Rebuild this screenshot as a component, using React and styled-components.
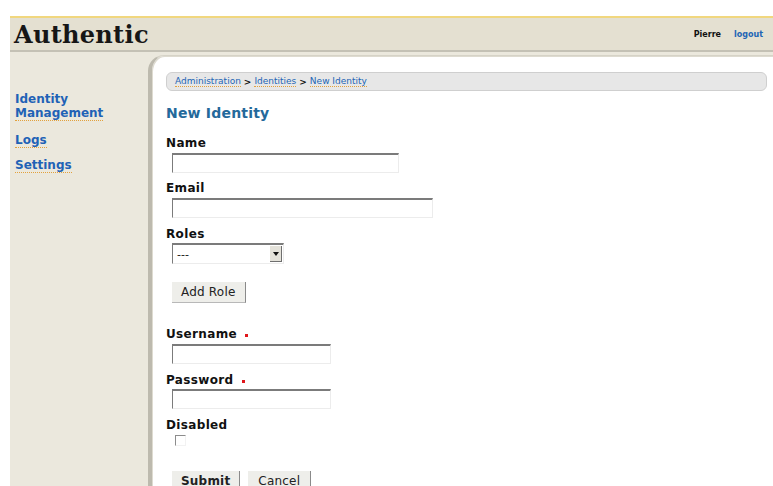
import React from 'react';
import styled, { createGlobalStyle } from 'styled-components';

const GlobalStyle = createGlobalStyle`
  html, body {
    margin: 0;
    padding: 0;
    background: #ffffff;
  }
  body {
    font-family: "DejaVu Sans", Verdana, sans-serif;
    color: #111;
    overflow: hidden;
  }
`;

const Page = styled.div`
  width: 773px;
  height: 486px;
  padding: 16px 0 0 10px;
  box-sizing: border-box;
  display: flex;
  flex-direction: column;
  overflow: hidden;
`;

// bandeau du haut
const Header = styled.header`
  flex-shrink: 0;
  height: 36px;
  box-sizing: border-box;
  background: #e4e0d1;
  border-top: 2px solid #f1d77e;
  border-bottom: 2px solid #c4c1b5;
  display: flex;
  align-items: center;
  justify-content: space-between;
  padding: 0 10px 0 4px;
`;

const Brand = styled.h1`
  margin: 0;
  font-family: "DejaVu Serif", "Liberation Serif", serif;
  font-weight: bold;
  font-size: 24px;
  color: #161616;
  letter-spacing: 0.3px;
`;

const UserBox = styled.div`
  display: flex;
  gap: 13px;
  font-size: 8px;
  font-weight: bold;
`;

const UserName = styled.span`
  color: #111;
`;

const Logout = styled.a`
  color: #2265b5;
  text-decoration: none;
`;

const Body = styled.div`
  flex: 1;
  min-height: 0;
  display: flex;
  background: #ebe8dd;
`;

const Sidebar = styled.nav`
  width: 138px;
  flex-shrink: 0;
  padding: 40px 0 0 5px;
  box-sizing: border-box;
  display: flex;
  flex-direction: column;
  gap: 10px;
`;

const MenuLink = styled.a`
  align-self: flex-start;
  font-size: 12px;
  line-height: 14px;
  font-weight: bold;
  color: #1f62b6;
  text-decoration: none;
  border-bottom: 1px dotted #e2a13c;
  margin-bottom: ${p => p.$after ?? 0}px;
`;

// panneau principal blanc
const Panel = styled.main`
  flex: 1;
  margin-top: 3px;
  background: #fff;
  border-top-left-radius: 16px;
  border-left: 4px solid #bdbaae;
  border-top: 1px solid #d6d3c7;
  box-shadow: inset 1px 1px 0 #dedbd0;
  padding: 16px 6px 0 14px;
  box-sizing: border-box;
  overflow: hidden;
`;

const Breadcrumb = styled.div`
  height: 19px;
  box-sizing: border-box;
  background: #e7e7e7;
  border: 1px solid #cfcfcf;
  border-radius: 6px;
  display: flex;
  align-items: center;
  padding-left: 8px;
  font-size: 9px;
  color: #111;
`;

const Crumb = styled.a`
  color: #2265b5;
  text-decoration: none;
  border-bottom: 1px dotted #e2a13c;
  line-height: 10px;
`;

const Sep = styled.span`
  font-weight: bold;
  margin: 0 3px;
`;

const Title = styled.h2`
  margin: 14px 0 0 0;
  font-size: 14px;
  line-height: 17px;
  font-weight: bold;
  color: #24699b;
  letter-spacing: 0.2px;
`;

const Field = styled.div`
  margin-top: ${p => p.$top}px;
`;

const Label = styled.label`
  display: flex;
  align-items: center;
  font-size: 12px;
  line-height: 15px;
  font-weight: bold;
  letter-spacing: 0.35px;
  color: #111;
  margin-bottom: ${p => p.$gap ?? 2}px;
`;

const Required = styled.span`
  display: inline-block;
  width: 3px;
  height: 3px;
  background: #e0161b;
  margin-left: 8px;
  margin-top: 1px;
`;

const TextInput = styled.input`
  display: block;
  width: ${p => p.$width}px;
  height: 20px;
  box-sizing: border-box;
  margin: 0 0 0 6px;
  padding: 0 3px;
  border-top: 2px solid #7b7b7b;
  border-left: 1px solid #7b7b7b;
  border-right: 1px solid #ececec;
  border-bottom: 1px solid #ececec;
  background: #fff;
  font-family: inherit;
  font-size: 11px;
`;

const Select = styled.div`
  width: 112px;
  height: 21px;
  margin-left: 6px;
  box-sizing: border-box;
  display: flex;
  align-items: center;
  border-top: 2px solid #7b7b7b;
  border-left: 1px solid #7b7b7b;
  border-right: 1px solid #ececec;
  border-bottom: 1px solid #ececec;
  font-size: 11px;
`;

const SelectValue = styled.span`
  flex: 1;
  padding-left: 4px;
`;

const SelectArrow = styled.span`
  width: 12px;
  height: 16px;
  margin-right: 1px;
  background: #e4e2da;
  border-right: 1px solid #6f6f6f;
  border-bottom: 1px solid #6f6f6f;
  display: flex;
  align-items: center;
  justify-content: center;
  box-sizing: border-box;
`;

const Button = styled.button`
  margin-left: ${p => p.$left ?? 6}px;
  height: 21px;
  padding: 0 ${p => p.$pad ?? 8}px;
  box-sizing: border-box;
  background: #eeeeea;
  border: none;
  border-right: 1px solid #8a8a8a;
  border-bottom: 1px solid #b8b8b8;
  font-family: inherit;
  font-size: 12px;
  font-weight: ${p => (p.$primary ? 'bold' : 'normal')};
  letter-spacing: 0.2px;
  color: #222;
`;

const ButtonRow = styled.div`
  display: flex;
  margin-top: ${p => p.$top}px;
`;

const Checkbox = styled.span`
  display: block;
  width: 11px;
  height: 11px;
  margin: ${p => p.$top}px 0 0 9px;
  box-sizing: border-box;
  border-top: 1px solid #8c8c8c;
  border-left: 1px solid #8c8c8c;
  border-right: 1px solid #f2f2f2;
  border-bottom: 1px solid #f2f2f2;
`;

export default function App() {
  return (
    <>
      <GlobalStyle />
      <Page>
        <Header>
          <Brand>Authentic</Brand>
          <UserBox>
            <UserName>Pierre</UserName>
            <Logout href="#">logout</Logout>
          </UserBox>
        </Header>
        <Body>
          <Sidebar>
            <MenuLink href="#" $after={2}>Identity<br />Management</MenuLink>
            <MenuLink href="#">Logs</MenuLink>
            <MenuLink href="#">Settings</MenuLink>
          </Sidebar>
          <Panel>
            <Breadcrumb>
              <Crumb href="#">Administration</Crumb>
              <Sep>&gt;</Sep>
              <Crumb href="#">Identities</Crumb>
              <Sep>&gt;</Sep>
              <Crumb href="#">New Identity</Crumb>
            </Breadcrumb>
            <Title>New Identity</Title>

            <Field $top={14}>
              <Label>Name</Label>
              <TextInput $width={227} />
            </Field>
            <Field $top={8}>
              <Label>Email</Label>
              <TextInput $width={261} />
            </Field>
            <Field $top={9}>
              <Label $gap={1}>Roles</Label>
              <Select>
                <SelectValue>---</SelectValue>
                <SelectArrow>
                  <svg width="6" height="4" viewBox="0 0 6 4">
                    <path d="M0 0h6L3 4z" fill="#111" />
                  </svg>
                </SelectArrow>
              </Select>
            </Field>
            <ButtonRow $top={18}>
              <Button $pad={9}>Add Role</Button>
            </ButtonRow>

            <Field $top={24}>
              <Label>Username<Required /></Label>
              <TextInput $width={159} />
            </Field>
            <Field $top={9}>
              <Label $gap={1}>Password<Required /></Label>
              <TextInput $width={159} type="password" />
            </Field>
            <Field $top={9}>
              <Label>Disabled</Label>
              <Checkbox $top={2} />
            </Field>

            <ButtonRow $top={25}>
              <Button $primary $pad={9}>Submit</Button>
              <Button $left={8} $pad={10}>Cancel</Button>
            </ButtonRow>
          </Panel>
        </Body>
      </Page>
    </>
  );
}
